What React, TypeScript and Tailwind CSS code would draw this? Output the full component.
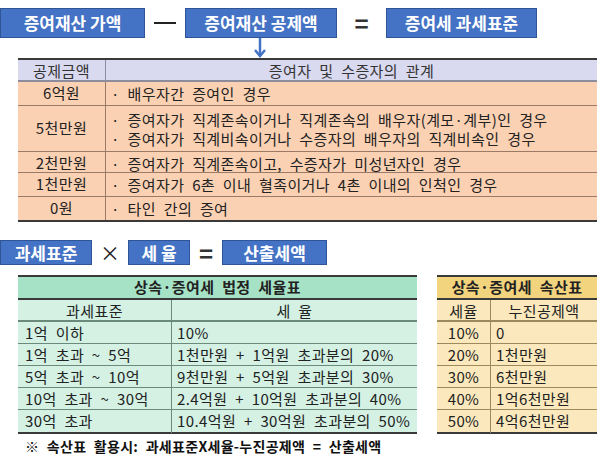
const font = { fontFamily: '"Noto Sans CJK KR", "Noto Sans", sans-serif' };

function BlueBox({ children, className }: { children: React.ReactNode; className: string }) {
  return (
    <div className={`bg-[#4472c4] border border-[#2f5597] text-white font-bold text-[17px] flex items-center justify-center ${className}`}>
      {children}
    </div>
  );
}

const deductions = [
  { amount: '6억원', lines: ['· 배우자간 증여인 경우'], h: 'h-[24px]' },
  {
    amount: '5천만원',
    lines: ['· 증여자가 직계존속이거나 직계존속의 배우자(계모·계부)인 경우', '· 증여자가 직계비속이거나 수증자의 배우자의 직계비속인 경우'],
    h: 'h-[46px]',
  },
  { amount: '2천만원', lines: ['· 증여자가 직계존속이고, 수증자가 미성년자인 경우'], h: 'h-[21px]' },
  { amount: '1천만원', lines: ['· 증여자가 6촌 이내 혈족이거나 4촌 이내의 인척인 경우'], h: 'h-[24px]' },
  { amount: '0원', lines: ['· 타인 간의 증여'], h: 'h-[23px]' },
];

const rates = [
  { base: '1억 이하', rate: '10%', pct: '10%', ded: '0' },
  { base: '1억 초과 ~ 5억', rate: '1천만원 + 1억원 초과분의 20%', pct: '20%', ded: '1천만원' },
  { base: '5억 초과 ~ 10억', rate: '9천만원 + 5억원 초과분의 30%', pct: '30%', ded: '6천만원' },
  { base: '10억 초과 ~ 30억', rate: '2.4억원 + 10억원 초과분의 40%', pct: '40%', ded: '1억6천만원' },
  { base: '30억 초과', rate: '10.4억원 + 30억원 초과분의 50%', pct: '50%', ded: '4억6천만원' },
];

export default function App() {
  return (
    <div className="w-[600px] h-[465px] bg-white text-[#222] overflow-hidden" style={font}>
      {/* formula 1 */}
      <div className="flex items-center pt-2">
        <BlueBox className="w-[145px] h-[30px]">증여재산 가액</BlueBox>
        <div className="w-[40px] flex justify-center">
          <div className="w-[22px] h-[1.5px] bg-[#222]" />
        </div>
        <BlueBox className="w-[152px] h-[30px]">증여재산 공제액</BlueBox>
        <div className="w-[49px] flex justify-center text-[24px] leading-none font-bold text-[#333]">=</div>
        <BlueBox className="w-[151px] h-[30px]">증여세 과세표준</BlueBox>
      </div>
      <div className="h-[20px] pl-[254px]">
        <svg width="12" height="20" viewBox="0 0 12 20">
          <line x1="6" y1="0" x2="6" y2="17" stroke="#4472c4" strokeWidth="2.5" />
          <path d="M1 12 L6 18 L11 12" fill="none" stroke="#4472c4" strokeWidth="2.5" />
        </svg>
      </div>

      {/* deduction table */}
      <div className="ml-[18px] w-[579px] border-t-2 border-b-2 border-[#3a3a3a] text-[15px] tracking-[0.4px] [word-spacing:4px]">
        <div className="grid grid-cols-[88px_1fr] h-[22px] bg-[#d9d9f0] border-b-2 border-[#8c8c9c] text-[#333]">
          <div className="flex items-center justify-center border-r border-[#8c8c9c]">공제금액</div>
          <div className="flex items-center justify-center">증여자 및 수증자의 관계</div>
        </div>
        {deductions.map((d, i) => (
          <div
            key={d.amount}
            className={`grid grid-cols-[88px_1fr] bg-[#fbd1b3] ${d.h} ${i < deductions.length - 1 ? 'border-b border-[#9b7b68]' : ''}`}
          >
            <div className="flex items-center justify-center border-r border-[#9b7b68]">{d.amount}</div>
            <div className="flex flex-col justify-center pl-[5px] leading-[19px]">
              {d.lines.map((l) => (
                <div key={l}>{l}</div>
              ))}
            </div>
          </div>
        ))}
      </div>

      {/* formula 2 */}
      <div className="flex items-center mt-[18px]">
        <BlueBox className="w-[92px] h-[25px]">과세표준</BlueBox>
        <div className="w-[36px] flex justify-center text-[20px] leading-none text-[#222]">×</div>
        <BlueBox className="w-[62px] h-[25px]">세 율</BlueBox>
        <div className="w-[32px] flex justify-center text-[24px] leading-none font-bold text-[#333]">=</div>
        <BlueBox className="w-[105px] h-[25px]">산출세액</BlueBox>
      </div>

      {/* rate tables */}
      <div className="flex mt-[10px] ml-[18px] gap-[20px] text-[15px] tracking-[0.4px] [word-spacing:4px]">
        <div className="w-[399px] border-t-2 border-b-2 border-[#3a3a3a]">
          <div className="h-[23px] bg-[#a6e3c6] border-b-2 border-[#3a3a3a] flex items-center justify-center font-bold">
            상속·증여세 법정 세율표
          </div>
          <div className="grid grid-cols-[154px_1fr] h-[22px] bg-[#d4f1e4] border-b-2 border-[#6a8a7c]">
            <div className="flex items-center justify-center border-r border-[#6a8a7c]">과세표준</div>
            <div className="flex items-center justify-center">세 율</div>
          </div>
          {rates.map((r, i) => (
            <div
              key={r.base}
              className={`grid grid-cols-[154px_1fr] h-[22px] bg-[#d4f1e4] ${i < rates.length - 1 ? 'border-b border-[#6a8a7c]' : ''}`}
            >
              <div className="flex items-center pl-[7px] border-r border-[#6a8a7c]">{r.base}</div>
              <div className="flex items-center pl-[5px]">{r.rate}</div>
            </div>
          ))}
        </div>

        <div className="w-[160px] border-t-2 border-b-2 border-[#3a3a3a]">
          <div className="h-[23px] bg-[#f3d47e] border-b-2 border-[#3a3a3a] flex items-center justify-center font-bold">
            상속·증여세 속산표
          </div>
          <div className="grid grid-cols-[54px_1fr] h-[22px] bg-[#fbe9bd] border-b-2 border-[#9c8a5c]">
            <div className="flex items-center justify-center border-r border-[#9c8a5c]">세율</div>
            <div className="flex items-center justify-center">누진공제액</div>
          </div>
          {rates.map((r, i) => (
            <div
              key={r.pct}
              className={`grid grid-cols-[54px_1fr] h-[22px] bg-[#fbe9bd] ${i < rates.length - 1 ? 'border-b border-[#9c8a5c]' : ''}`}
            >
              <div className="flex items-center justify-center border-r border-[#9c8a5c]">{r.pct}</div>
              <div className="flex items-center pl-[5px]">{r.ded}</div>
            </div>
          ))}
        </div>
      </div>

      <div className="mt-[2px] pl-[25px] text-[14px] leading-[20px] font-bold text-[#111] tracking-[0.3px] [word-spacing:4px]">
        ※ 속산표 활용시: 과세표준X세율-누진공제액 = 산출세액
      </div>
    </div>
  );
}
